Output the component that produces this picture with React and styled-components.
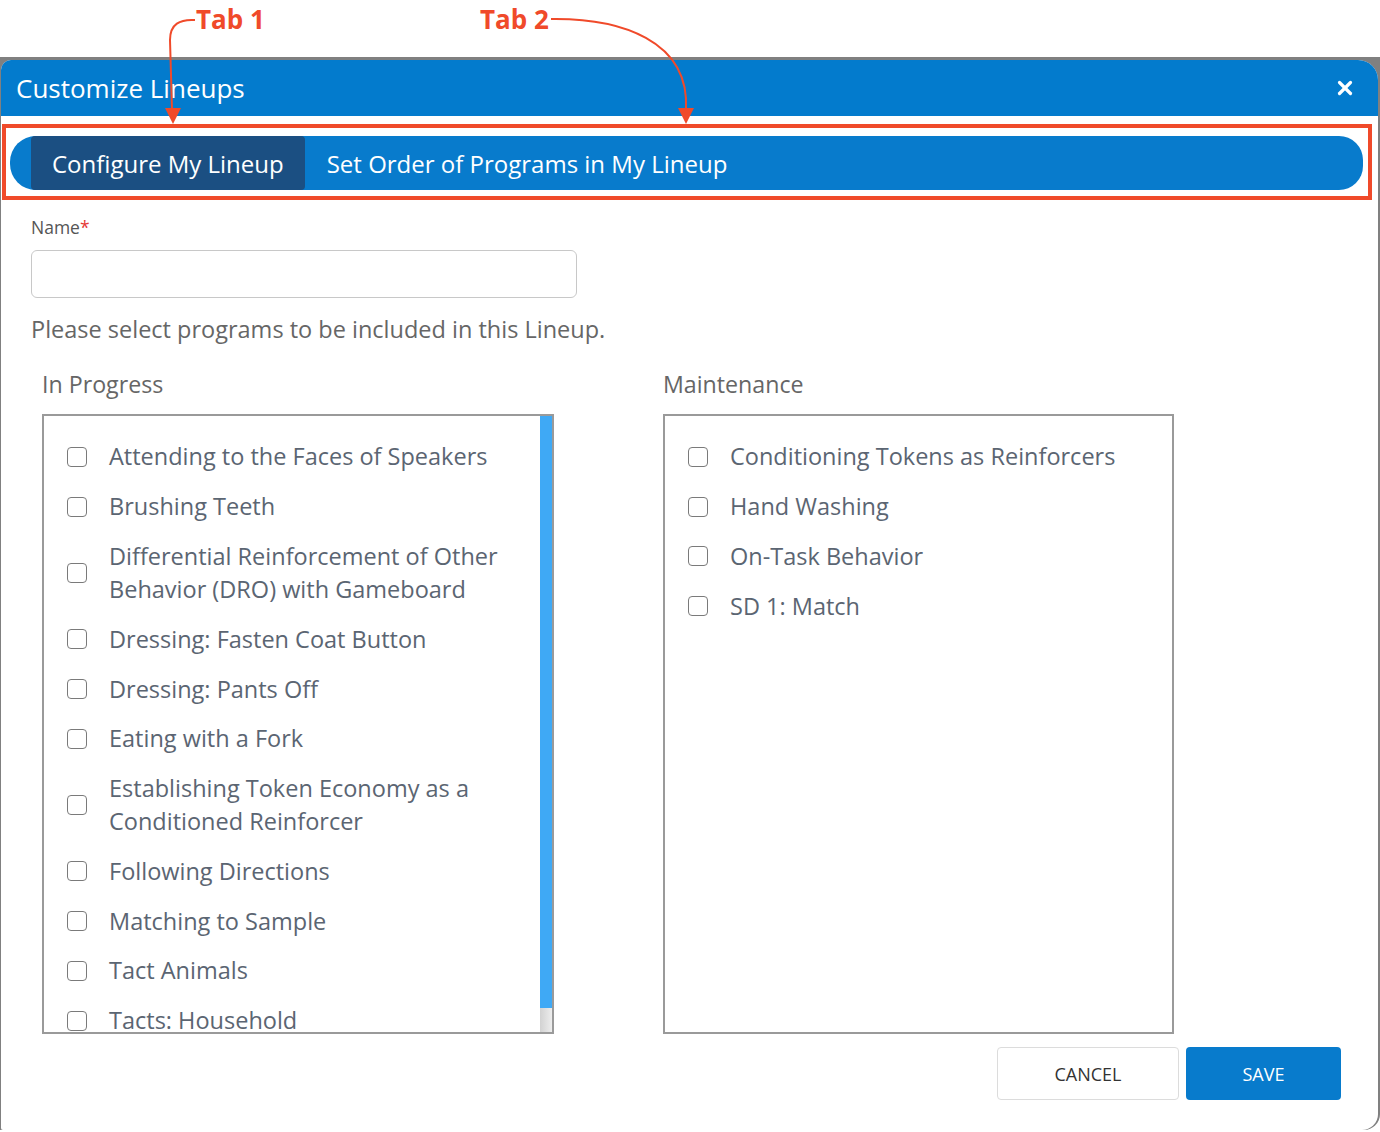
import styled, { createGlobalStyle } from "styled-components";
import { X } from "lucide-react";

const GlobalStyle = createGlobalStyle`
  body {
    margin: 0;
    background: #fff;
    font-family: "Open Sans", "Noto Sans", sans-serif;
  }
  * { box-sizing: border-box; }
`;

const Page = styled.div`
  position: relative;
  width: 1380px;
  height: 1132px;
  overflow: hidden;
  background: #fff;
`;

const TopStrip = styled.div`
  height: 57px;
`;

const Backdrop = styled.div`
  background: #808080;
  padding: 3px 2px 0 1px;
  border-bottom-right-radius: 16px;
`;

const Modal = styled.div`
  background: #fff;
  border-radius: 10px 20px 16px 2px;
  overflow: hidden;
  height: 1070px;
  display: flex;
  flex-direction: column;
`;

const Header = styled.div`
  height: 56px;
  background: #037bcd;
  display: flex;
  align-items: center;
  justify-content: space-between;
  padding: 0 22px 0 15px;
  color: #fff;
`;

const Title = styled.h1`
  margin: 0;
  font-size: 26px;
  font-weight: 400;
`;

const CloseButton = styled.button`
  background: none;
  border: none;
  padding: 0;
  color: #fff;
  display: flex;
  cursor: pointer;
`;

const TabFrame = styled.div`
  margin: 8px 6px 0 1px;
  border: 4px solid #f04a2a;
  padding: 8px 5px 6px 4px;
`;

const TabBar = styled.div`
  display: flex;
  height: 54px;
  background: #087bcc;
  border-radius: 26px 24px 24px 26px;
  padding-left: 21px;
`;

const Tab = styled.div`
  display: flex;
  align-items: center;
  padding: 0 ${(p) => (p.$active ? "21px" : "22px")};
  font-size: 24px;
  color: #fff;
  border-radius: 4px;
  background: ${(p) => (p.$active ? "#1b4f82" : "transparent")};
`;

const Content = styled.div`
  flex: 1;
  display: flex;
  flex-direction: column;
  padding: 0 30px;
`;

const Label = styled.label`
  margin-top: 15px;
  font-size: 17.5px;
  line-height: 24px;
  color: #555;

  span {
    color: #e53935;
  }
`;

const NameInput = styled.input`
  margin-top: 11px;
  width: 546px;
  height: 48px;
  border: 1px solid #c8c8c8;
  border-radius: 6px;
  outline: none;
`;

const Hint = styled.p`
  margin: 16px 0 0;
  font-size: 23.5px;
  line-height: 30px;
  color: #666;
`;

const Columns = styled.div`
  margin-top: 25px;
  padding-left: 11px;
  display: grid;
  grid-template-columns: 512px 511px;
  column-gap: 109px;
`;

const ColumnTitle = styled.h2`
  margin: 0;
  font-size: 23.2px;
  line-height: 30px;
  font-weight: 400;
  color: #666;
`;

const ListBox = styled.div`
  margin-top: 15px;
  height: 620px;
  border: 2px solid #9a9a9a;
  display: flex;
`;

const ListItems = styled.div`
  flex: 1;
  overflow: hidden;
  padding: 16px 0 0 23px;
`;

const ScrollTrack = styled.div`
  width: 12px;
  display: flex;
  flex-direction: column;
  background: linear-gradient(90deg, #d2d2d2, #ededed);
`;

const ScrollThumb = styled.div`
  height: 592px;
  background: #3fa9f5;
`;

const Item = styled.div`
  display: flex;
  align-items: center;
  gap: 22px;
  padding: 8.4px 0;
  font-size: 23.5px;
  line-height: 33px;
  color: #5b6572;
`;

const Checkbox = styled.span`
  flex-shrink: 0;
  width: 20px;
  height: 20px;
  border: 1.5px solid #7a7a7a;
  border-radius: 4px;
  background: #fff;
`;

const Footer = styled.div`
  margin-top: 13px;
  padding-right: 7px;
  display: flex;
  justify-content: flex-end;
  gap: 7px;
`;

const Button = styled.button`
  height: 53px;
  width: ${(p) => (p.$primary ? "155px" : "182px")};
  border-radius: 4px;
  font-family: inherit;
  font-size: 18px;
  background: ${(p) => (p.$primary ? "#087bcc" : "#fff")};
  color: ${(p) => (p.$primary ? "#fff" : "#333")};
  border: ${(p) => (p.$primary ? "none" : "1px solid #dcdcdc")};
`;

const Annotations = styled.svg`
  position: absolute;
  top: 0;
  left: 0;
  pointer-events: none;
`;

const AnnotationLabel = styled.div`
  position: absolute;
  top: 4px;
  left: ${(p) => p.$left}px;
  font-size: 26px;
  line-height: 30px;
  font-weight: 700;
  color: #f04a2a;
`;

const inProgress = [
  "Attending to the Faces of Speakers",
  "Brushing Teeth",
  "Differential Reinforcement of Other Behavior (DRO) with Gameboard",
  "Dressing: Fasten Coat Button",
  "Dressing: Pants Off",
  "Eating with a Fork",
  "Establishing Token Economy as a Conditioned Reinforcer",
  "Following Directions",
  "Matching to Sample",
  "Tact Animals",
  "Tacts: Household",
];

const maintenance = [
  "Conditioning Tokens as Reinforcers",
  "Hand Washing",
  "On-Task Behavior",
  "SD 1: Match",
];

function ProgramList({ title, items, scroll }) {
  return (
    <div>
      <ColumnTitle>{title}</ColumnTitle>
      <ListBox>
        <ListItems>
          {items.map((name) => (
            <Item key={name}>
              <Checkbox />
              <span>{name}</span>
            </Item>
          ))}
        </ListItems>
        {scroll && (
          <ScrollTrack>
            <ScrollThumb />
          </ScrollTrack>
        )}
      </ListBox>
    </div>
  );
}

export default function App() {
  return (
    <Page>
      <GlobalStyle />
      <TopStrip />
      <Backdrop>
        <Modal>
          <Header>
            <Title>Customize Lineups</Title>
            <CloseButton>
              <X size={22} strokeWidth={3.5} />
            </CloseButton>
          </Header>
          <TabFrame>
            <TabBar>
              <Tab $active>Configure My Lineup</Tab>
              <Tab>Set Order of Programs in My Lineup</Tab>
            </TabBar>
          </TabFrame>
          <Content>
            <Label>
              Name<span>*</span>
            </Label>
            <NameInput />
            <Hint>Please select programs to be included in this Lineup.</Hint>
            <Columns>
              <ProgramList title="In Progress" items={inProgress} scroll />
              <ProgramList title="Maintenance" items={maintenance} />
            </Columns>
            <Footer>
              <Button>CANCEL</Button>
              <Button $primary>SAVE</Button>
            </Footer>
          </Content>
        </Modal>
      </Backdrop>

      <AnnotationLabel $left={196}>Tab 1</AnnotationLabel>
      <AnnotationLabel $left={480}>Tab 2</AnnotationLabel>
      <Annotations width="1380" height="130" viewBox="0 0 1380 130">
        <g fill="none" stroke="#f04a2a" strokeWidth="2">
          <path d="M195 20 C180 19 170 24 170 40 L172 110" />
          <path d="M551 19 C620 18 690 40 686 110" />
        </g>
        <g fill="#f04a2a">
          <polygon points="165,108 181,108 173,124" />
          <polygon points="678,108 694,108 686,124" />
        </g>
      </Annotations>
    </Page>
  );
}
